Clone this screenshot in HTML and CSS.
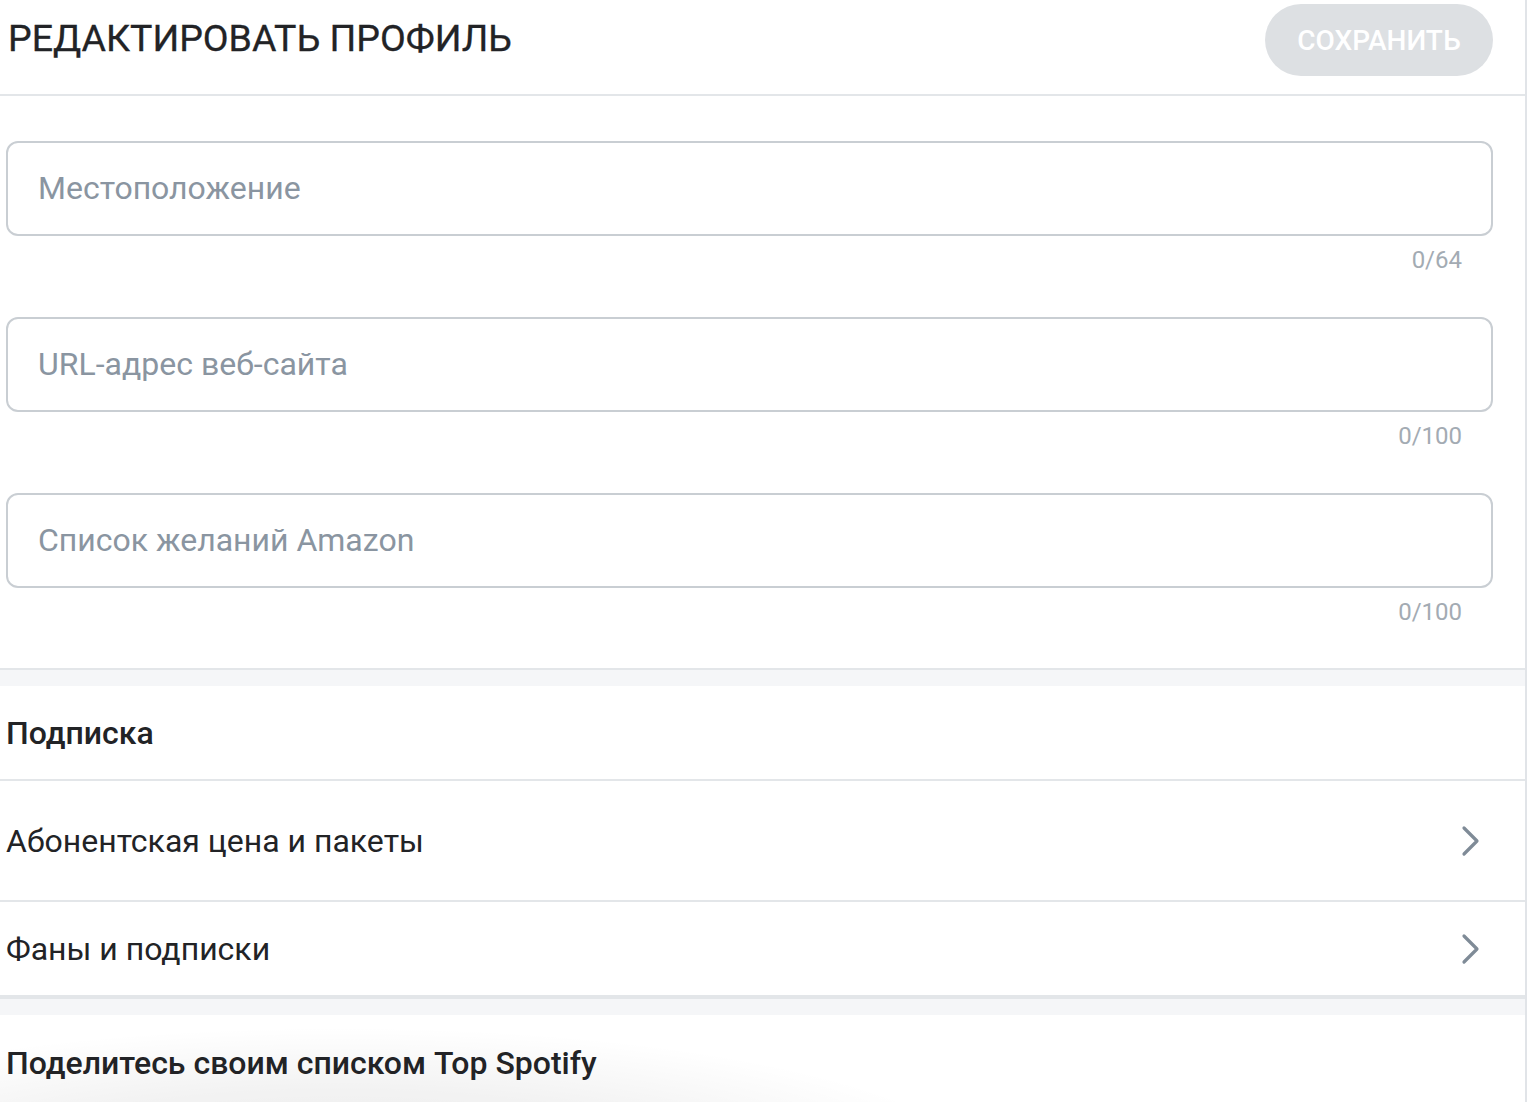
FILE: index.html
```html
<!DOCTYPE html>
<html lang="ru">
<head>
<meta charset="utf-8">
<title>Редактировать профиль</title>
<link rel="stylesheet" href="styles.css">
</head>
<body>
<div class="page">
  <header class="topbar">
    <h1 class="title">РЕДАКТИРОВАТЬ ПРОФИЛЬ</h1>
    <button class="save" disabled>СОХРАНИТЬ</button>
  </header>

  <section class="fields">
    <div class="field">
      <div class="input"><span class="placeholder">Местоположение</span></div>
      <div class="counter">0/64</div>
    </div>
    <div class="field">
      <div class="input"><span class="placeholder">URL-адрес веб-сайта</span></div>
      <div class="counter">0/100</div>
    </div>
    <div class="field">
      <div class="input"><span class="placeholder">Список желаний Amazon</span></div>
      <div class="counter">0/100</div>
    </div>
  </section>

  <div class="band"></div>

  <section class="group">
    <div class="group-title">Подписка</div>
    <div class="row row-tall">
      <span>Абонентская цена и пакеты</span>
      <svg class="chev" width="20" height="32" viewBox="0 0 20 32"><path d="M3 3 L16 16 L3 29" fill="none" stroke="#7f8b97" stroke-width="3.2" stroke-linecap="round" stroke-linejoin="round"/></svg>
    </div>
    <div class="row">
      <span>Фаны и подписки</span>
      <svg class="chev" width="20" height="32" viewBox="0 0 20 32"><path d="M3 3 L16 16 L3 29" fill="none" stroke="#7f8b97" stroke-width="3.2" stroke-linecap="round" stroke-linejoin="round"/></svg>
    </div>
  </section>

  <div class="band"></div>

  <section class="group last">
    <div class="group-title spotify">Поделитесь своим списком Top Spotify</div>
  </section>
</div>
</body>
</html>
```

FILE: styles.css
```css
* { box-sizing: border-box; }
html, body { margin: 0; padding: 0; background: #fff; }
body { font-family: Roboto, "Noto Sans", "Liberation Sans", sans-serif; color: #222326; overflow: hidden; height: 1102px; }

.page {
  width: 1527px;
  height: 1102px;
  border-right: 2px solid #e1e4e8;
  position: relative;
  overflow: hidden;
}

.topbar {
  height: 96px;
  border-bottom: 2px solid #e3e6e9;
  display: flex;
  align-items: flex-start;
  justify-content: space-between;
  padding: 4px 32px 0 8px;
}
.title {
  margin: 9px 0 0 0;
  font-size: 37.5px;
  font-weight: 400;
  -webkit-text-stroke: 0.3px #222326;
  letter-spacing: 0;
  line-height: 50px;
  color: #222326;
}
.save {
  width: 228px;
  height: 72px;
  border: none;
  border-radius: 36px;
  background: #dde0e3;
  color: #fff;
  font-family: Roboto, "Noto Sans", sans-serif;
  font-size: 28px;
  font-weight: 500;
  padding: 0;
}

.fields { padding: 45px 32px 36px 6px; }
.field { margin-bottom: 14px; }
.field:last-child { margin-bottom: 0; }
.input {
  height: 95px;
  border: 2px solid #c9ced3;
  border-radius: 12px;
  display: flex;
  align-items: center;
  padding-left: 30px;
  padding-bottom: 2px;
}
.placeholder { font-size: 32px; color: #8a95a1; }
.counter {
  text-align: right;
  padding-right: 31px;
  font-size: 24px;
  color: #a3abb3;
  height: 67px;
  line-height: 24px;
  padding-top: 12px;
}
.field:last-child .counter { height: 44px; }

.band {
  height: 18px;
  border-top: 2px solid #e3e6e9;
  background: #f5f6f8;
}

.group-title {
  height: 95px;
  display: flex;
  align-items: center;
  padding-left: 6px;
  font-size: 32px;
  font-weight: 500;
  border-bottom: 2px solid #e3e6e9;
}
.row {
  height: 96px;
  display: flex;
  align-items: center;
  justify-content: space-between;
  padding: 0 44px 0 6px;
  font-size: 32px;
  border-bottom: 2px solid #e3e6e9;
}
.row-tall { height: 121px; }
.row:last-child { height: 95px; }

.group.last { position: relative; height: 100px; }
.group.last .group-title { border-bottom: none; }
.spotify { position: relative; z-index: 1; }
.group.last::after {
  content: "";
  position: absolute;
  left: -200px;
  top: 10px;
  width: 1200px;
  height: 200px;
  background: radial-gradient(ellipse at 45% 75%, rgba(0,0,0,0.08) 0%, rgba(0,0,0,0.05) 40%, rgba(0,0,0,0) 70%);
  pointer-events: none;
}
```
